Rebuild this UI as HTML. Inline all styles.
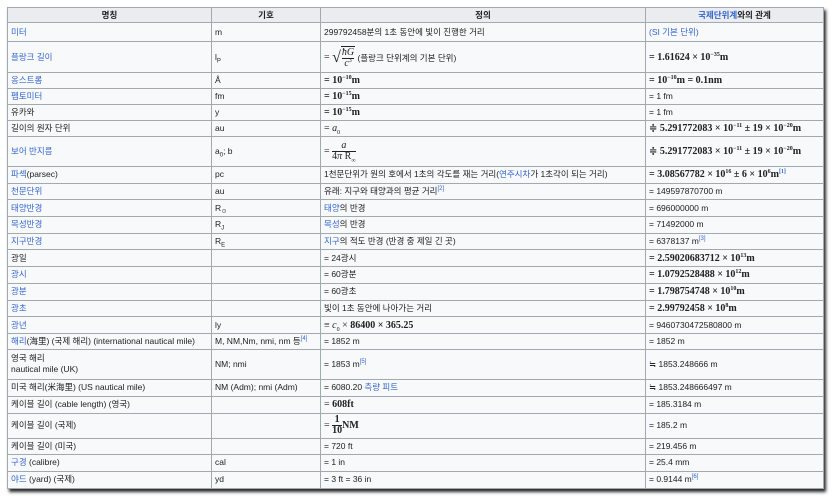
<!DOCTYPE html>
<html><head><meta charset="utf-8"><style>
body{margin:0;width:833px;height:496px;background:#fff;overflow:hidden;font-family:"Liberation Sans","Noto Sans CJK KR",sans-serif;}
table{position:absolute;left:7px;top:7px;border-collapse:collapse;table-layout:fixed;width:816px;background:#f8f9fa;box-shadow:2px 3px 3px #2a2a2a;font-size:8.5px;color:#202122;}
td,th{border:1px solid #a2a9b1;padding:0 3px;white-space:nowrap;overflow:hidden;line-height:11px;}
th{background:#eaecf0;font-weight:bold;text-align:center;height:14px;}
a{color:#3366cc;text-decoration:none}
.m{font-family:"Liberation Serif","DejaVu Serif",serif;font-size:10px;}
.b{font-weight:bold}
sup{font-size:6px;line-height:0;vertical-align:4px}
sub{font-size:6px;line-height:0}
.fr{display:inline-block;vertical-align:middle;text-align:center;line-height:10px}
.fr span{display:block}
.fr .n{border-bottom:1px solid #202122}
.sq{display:inline-block;border-top:1px solid #202122;padding:1px 1px 0}
tr.s{height:16.7px}
</style></head><body>
<table>
<colgroup><col style="width:204px"><col style="width:109px"><col style="width:325px"><col style="width:178px"></colgroup>
<tr><th>명칭</th><th>기호</th><th>정의</th><th><a>국제단위계</a>와의 관계</th></tr>
<tr style="height:19px"><td><a>미터</a></td><td>m</td><td>299792458분의 1초 동안에 빛이 진행한 거리</td><td><a>(SI 기본 단위)</a></td></tr>
<tr style="height:31px"><td><a>플랑크 길이</a></td><td>l<sub>P</sub></td><td><span class="m">= <span style="font-size:16px;vertical-align:middle">√</span><span class="sq"><span class="fr"><span class="n"><i>ħG</i></span><span><i>c</i><sup>3</sup></span></span></span></span> (플랑크 단위계의 기본 단위)</td><td class="m b">= 1.61624 × 10<sup>−35</sup>m</td></tr>
<tr style="height:16px"><td><a>옹스트롬</a></td><td>Å</td><td class="m b">= 10<sup>−10</sup>m</td><td class="m b">= 10<sup>−10</sup>m = 0.1nm</td></tr>
<tr style="height:16px"><td><a>펨토미터</a></td><td>fm</td><td class="m b">= 10<sup>−15</sup>m</td><td>= 1 fm</td></tr>
<tr style="height:16px"><td>유카와</td><td>y</td><td class="m b">= 10<sup>−15</sup>m</td><td>= 1 fm</td></tr>
<tr style="height:16px"><td>길이의 원자 단위</td><td>au</td><td class="m">= <i>a</i><sub>0</sub></td><td class="m b">≑ 5.291772083 × 10<sup>−11</sup> ± 19 × 10<sup>−20</sup>m</td></tr>
<tr style="height:30px"><td><a>보어 반지름</a></td><td>a<sub>0</sub>; b</td><td class="m">= <span class="fr"><span class="n"><i>a</i></span><span>4<i>π</i> R<sub>∞</sub></span></span></td><td class="m b">≑ 5.291772083 × 10<sup>−11</sup> ± 19 × 10<sup>−20</sup>m</td></tr>
<tr class="s"><td><a>파섹</a>(parsec)</td><td>pc</td><td>1천문단위가 원의 호에서 1초의 각도를 재는 거리(<a>연주시차</a>가 1초각이 되는 거리)</td><td class="m b">= 3.08567782 × 10<sup>16</sup> ± 6 × 10<sup>6</sup>m<sup><a>[1]</a></sup></td></tr>
<tr class="s"><td><a>천문단위</a></td><td>au</td><td>유래: 지구와 태양과의 평균 거리<sup><a>[2]</a></sup></td><td>= 149597870700 m</td></tr>
<tr class="s"><td><a>태양반경</a></td><td>R<sub>☉</sub></td><td><a>태양</a>의 반경</td><td>= 696000000 m</td></tr>
<tr class="s"><td><a>목성반경</a></td><td>R<sub>J</sub></td><td><a>목성</a>의 반경</td><td>= 71492000 m</td></tr>
<tr class="s"><td><a>지구반경</a></td><td>R<sub>E</sub></td><td><a>지구</a>의 적도 반경 (반경 중 제일 긴 곳)</td><td>= 6378137 m<sup><a>[3]</a></sup></td></tr>
<tr class="s"><td>광일</td><td></td><td>= 24광시</td><td class="m b">= 2.59020683712 × 10<sup>13</sup>m</td></tr>
<tr class="s"><td><a>광시</a></td><td></td><td>= 60광분</td><td class="m b">= 1.0792528488 × 10<sup>12</sup>m</td></tr>
<tr class="s"><td><a>광분</a></td><td></td><td>= 60광초</td><td class="m b">= 1.798754748 × 10<sup>10</sup>m</td></tr>
<tr class="s"><td><a>광초</a></td><td></td><td>빛이 1초 동안에 나아가는 거리</td><td class="m b">= 2.99792458 × 10<sup>8</sup>m</td></tr>
<tr class="s"><td><a>광년</a></td><td>ly</td><td class="m">≡ <i>c</i><sub>0</sub> × <b>86400 × 365.25</b></td><td>= 9460730472580800 m</td></tr>
<tr style="height:16px"><td><a>해리</a>(海里) (국제 해리) (international nautical mile)</td><td>M, NM,Nm, nmi, nm 등<sup><a>[4]</a></sup></td><td>= 1852 m</td><td>= 1852 m</td></tr>
<tr style="height:30px"><td>영국 해리<br>nautical mile (UK)</td><td>NM; nmi</td><td>= 1853 m<sup><a>[5]</a></sup></td><td>≒ 1853.248666 m</td></tr>
<tr style="height:17px"><td>미국 해리(米海里) (US nautical mile)</td><td>NM (Adm); nmi (Adm)</td><td>= 6080.20 <a>측량 피트</a></td><td>≒ 1853.248666497 m</td></tr>
<tr style="height:17px"><td>케이블 길이 (cable length) (영국)</td><td></td><td class="m">= <b>608ft</b></td><td>= 185.3184 m</td></tr>
<tr style="height:25px"><td>케이블 길이 (국제)</td><td></td><td class="m">= <span class="fr b"><span class="n">1</span><span>10</span></span><b>NM</b></td><td>= 185.2 m</td></tr>
<tr style="height:16px"><td>케이블 길이 (미국)</td><td></td><td>= 720 ft</td><td>= 219.456 m</td></tr>
<tr style="height:17px"><td><a>구경</a> (calibre)</td><td>cal</td><td>= 1 in</td><td>= 25.4 mm</td></tr>
<tr style="height:17px"><td><a>야드</a> (yard) (국제)</td><td>yd</td><td>= 3 ft = 36 in</td><td>= 0.9144 m<sup><a>[6]</a></sup></td></tr>
</table>
</body></html>
